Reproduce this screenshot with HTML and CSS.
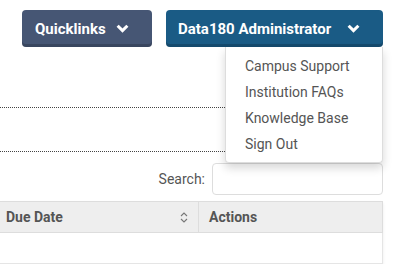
FILE: index.html
```html
<!DOCTYPE html>
<html lang="en">
<head>
    <meta charset="UTF-8">
    <title>Data180</title>
    <link rel="stylesheet" href="styles.css">
</head>
<body>
    <div class="topbar">
        <button class="nav-btn quick">Quicklinks
            <svg class="chev" viewBox="0 0 12 8" width="13" height="9"><path d="M1.5 1.5 L6 6 L10.5 1.5" fill="none" stroke="#fff" stroke-width="2.8"/></svg>
        </button>
        <div class="user-wrap">
            <button class="nav-btn admin">Data180 Administrator
                <svg class="chev" viewBox="0 0 12 8" width="13" height="9"><path d="M1.5 1.5 L6 6 L10.5 1.5" fill="none" stroke="#fff" stroke-width="2.8"/></svg>
            </button>
            <ul class="user-menu">
                <li>Campus Support</li>
                <li>Institution FAQs</li>
                <li>Knowledge Base</li>
                <li>Sign Out</li>
            </ul>
        </div>
    </div>

    <div class="content">
        <div class="section first"></div>
        <div class="section"></div>

        <div class="search-row">
            <label>Search:</label>
            <input type="text">
        </div>

        <table class="grid">
            <thead>
                <tr>
                    <th class="due">Due Date
                        <svg class="sort" viewBox="0 0 8 11" width="8" height="11"><path d="M1 4 L4 1 L7 4 M1 7 L4 10 L7 7" fill="none" stroke="#777" stroke-width="1.1"/></svg>
                    </th>
                    <th>Actions</th>
                </tr>
            </thead>
            <tbody>
                <tr><td></td><td></td></tr>
            </tbody>
        </table>
    </div>
</body>
</html>
```

FILE: styles.css
```css
body {
    margin: 0;
    font-family: Roboto, "Liberation Sans", sans-serif;
    background: #fff;
    color: #555;
}

.topbar {
    display: flex;
    justify-content: flex-end;
    gap: 14px;
    padding: 10px 12px 0 0;
}

.nav-btn {
    display: flex;
    align-items: center;
    height: 37px;
    border: none;
    border-radius: 4px;
    color: #fff;
    font-family: Roboto, "Liberation Sans", sans-serif;
    font-size: 15px;
    font-weight: bold;
    padding: 0 23px 0 13px;
    box-shadow: inset 0 -3px 0 rgba(0, 0, 0, 0.18);
}

.nav-btn .chev {
    margin-left: 10px;
}

.quick {
    background-color: #465674;
    width: 130px;
}

.admin {
    background-color: #1a5b85;
    width: 217px;
    padding-left: 12px;
}

.admin .chev {
    margin-left: auto;
}

.user-wrap {
    position: relative;
}

.user-menu {
    position: absolute;
    top: 37px;
    right: 0;
    width: 158px;
    margin: 0;
    padding: 6px 0 5px;
    list-style: none;
    background: #fff;
    border: 1px solid #ddd;
    border-top: none;
    border-radius: 0 0 4px 4px;
    box-shadow: 0 5px 10px rgba(0, 0, 0, 0.16);
    z-index: 5;
    box-sizing: border-box;
}

.user-menu li {
    font-size: 14px;
    line-height: 26px;
    padding-left: 19px;
    color: #555;
}

.content {
    padding-right: 12px;
}

.section {
    border-bottom: 1px dotted #444;
    height: 43px;
}

.section.first {
    height: 60px;
}

.search-row {
    display: flex;
    justify-content: flex-end;
    align-items: center;
    gap: 7px;
    margin-top: 11px;
    font-size: 14px;
}

.search-row input {
    width: 171px;
    height: 32px;
    box-sizing: border-box;
    border: 1px solid #ddd;
    border-radius: 4px;
}

.grid {
    width: 100%;
    margin-top: 6px;
    border-collapse: collapse;
    box-shadow: 0 2px 3px rgba(0, 0, 0, 0.08);
}

.grid th {
    background: #eee;
    text-align: left;
    font-size: 14px;
    font-weight: bold;
    height: 30px;
    padding: 0 10px;
    border-top: 1px solid #ddd;
    border-bottom: 1px solid #ddd;
    border-right: 1px solid #ddd;
}

.grid th.due {
    width: 182px;
    padding-left: 6px;
}

.grid th .sort {
    float: right;
    margin-top: 3px;
}

.grid td {
    height: 28px;
    border-bottom: 1px solid #e5e5e5;
}

.grid td:last-child {
    border-right: 1px solid #e5e5e5;
}
```
